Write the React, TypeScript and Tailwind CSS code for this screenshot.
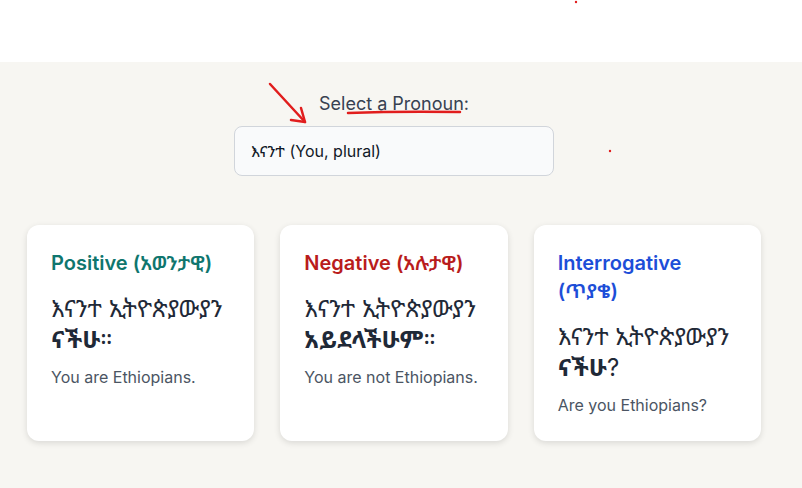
import React from "react";

const cards = [
  {
    title: "Positive",
    am: "(አወንታዊ)",
    color: "text-[#0f766e]",
    base: "እናንተ ኢትዮጵያውያን",
    end: "ናችሁ",
    punct: "።",
    en: "You are Ethiopians.",
  },
  {
    title: "Negative",
    am: "(አሉታዊ)",
    color: "text-[#b91c1c]",
    base: "እናንተ ኢትዮጵያውያን",
    end: "አይደላችሁም",
    punct: "።",
    en: "You are not Ethiopians.",
  },
  {
    title: "Interrogative",
    am: "(ጥያቄ)",
    color: "text-[#1d4ed8]",
    base: "እናንተ ኢትዮጵያውያን",
    end: "ናችሁ",
    punct: "?",
    en: "Are you Ethiopians?",
  },
];

export default function App() {
  return (
    <div
      className="relative w-[802px] h-[488px] overflow-hidden bg-white"
      style={{ fontFamily: "Inter, 'Noto Sans Ethiopic', 'Abyssinica SIL', 'Noto Sans', sans-serif" }}
    >
      {/* header area */}
      <div className="h-[62px] bg-white" />

      <main className="h-[426px] bg-[#f7f6f2] pt-[28px]">
        <div className="w-[788px]">
          {/* pronoun picker */}
          <div className="flex flex-col items-center">
            <label className="text-lg leading-7 text-[#374151]">Select a Pronoun:</label>
            <div className="mt-2 w-[320px] h-[50px] flex items-center px-4 rounded-lg border border-[#d1d5db] bg-[#f9fafb] text-base text-[#111827]">
              እናንተ (You, plural)
            </div>
          </div>

          {/* cards */}
          <div className="mt-[49px] px-[27px] grid grid-cols-3 gap-[26px]">
            {cards.map((c) => (
              <div
                key={c.title}
                className="h-[216px] rounded-xl bg-white px-6 pt-6 shadow-[0_2px_6px_rgba(0,0,0,0.12)]"
              >
                <h3 className={`text-xl font-semibold leading-7 ${c.color}`}>
                  {c.title} {c.am}
                </h3>
                <p className="mt-4 text-2xl leading-[31px] text-[#1f2937]">
                  {c.base} <span className="font-bold">{c.end}</span>
                  {c.punct}
                </p>
                <p className="mt-2.5 text-base leading-6 text-[#4b5563]">{c.en}</p>
              </div>
            ))}
          </div>
        </div>
      </main>

      {/* red annotations over the screenshot */}
      <svg className="absolute left-0 top-0 pointer-events-none" width="802" height="488">
        <path d="M270 84 L305 122" stroke="#e11d1d" strokeWidth="2.5" fill="none" strokeLinecap="round" />
        <path d="M291 120 L305 122 L301 108" stroke="#e11d1d" strokeWidth="2.5" fill="none" strokeLinecap="round" strokeLinejoin="round" />
        <path d="M348 113 Q400 111 460 112" stroke="#e11d1d" strokeWidth="2.5" fill="none" strokeLinecap="round" />
        <circle cx="576" cy="2" r="1.2" fill="#e11d1d" />
        <circle cx="610" cy="151" r="1.2" fill="#e11d1d" />
      </svg>
    </div>
  );
}
